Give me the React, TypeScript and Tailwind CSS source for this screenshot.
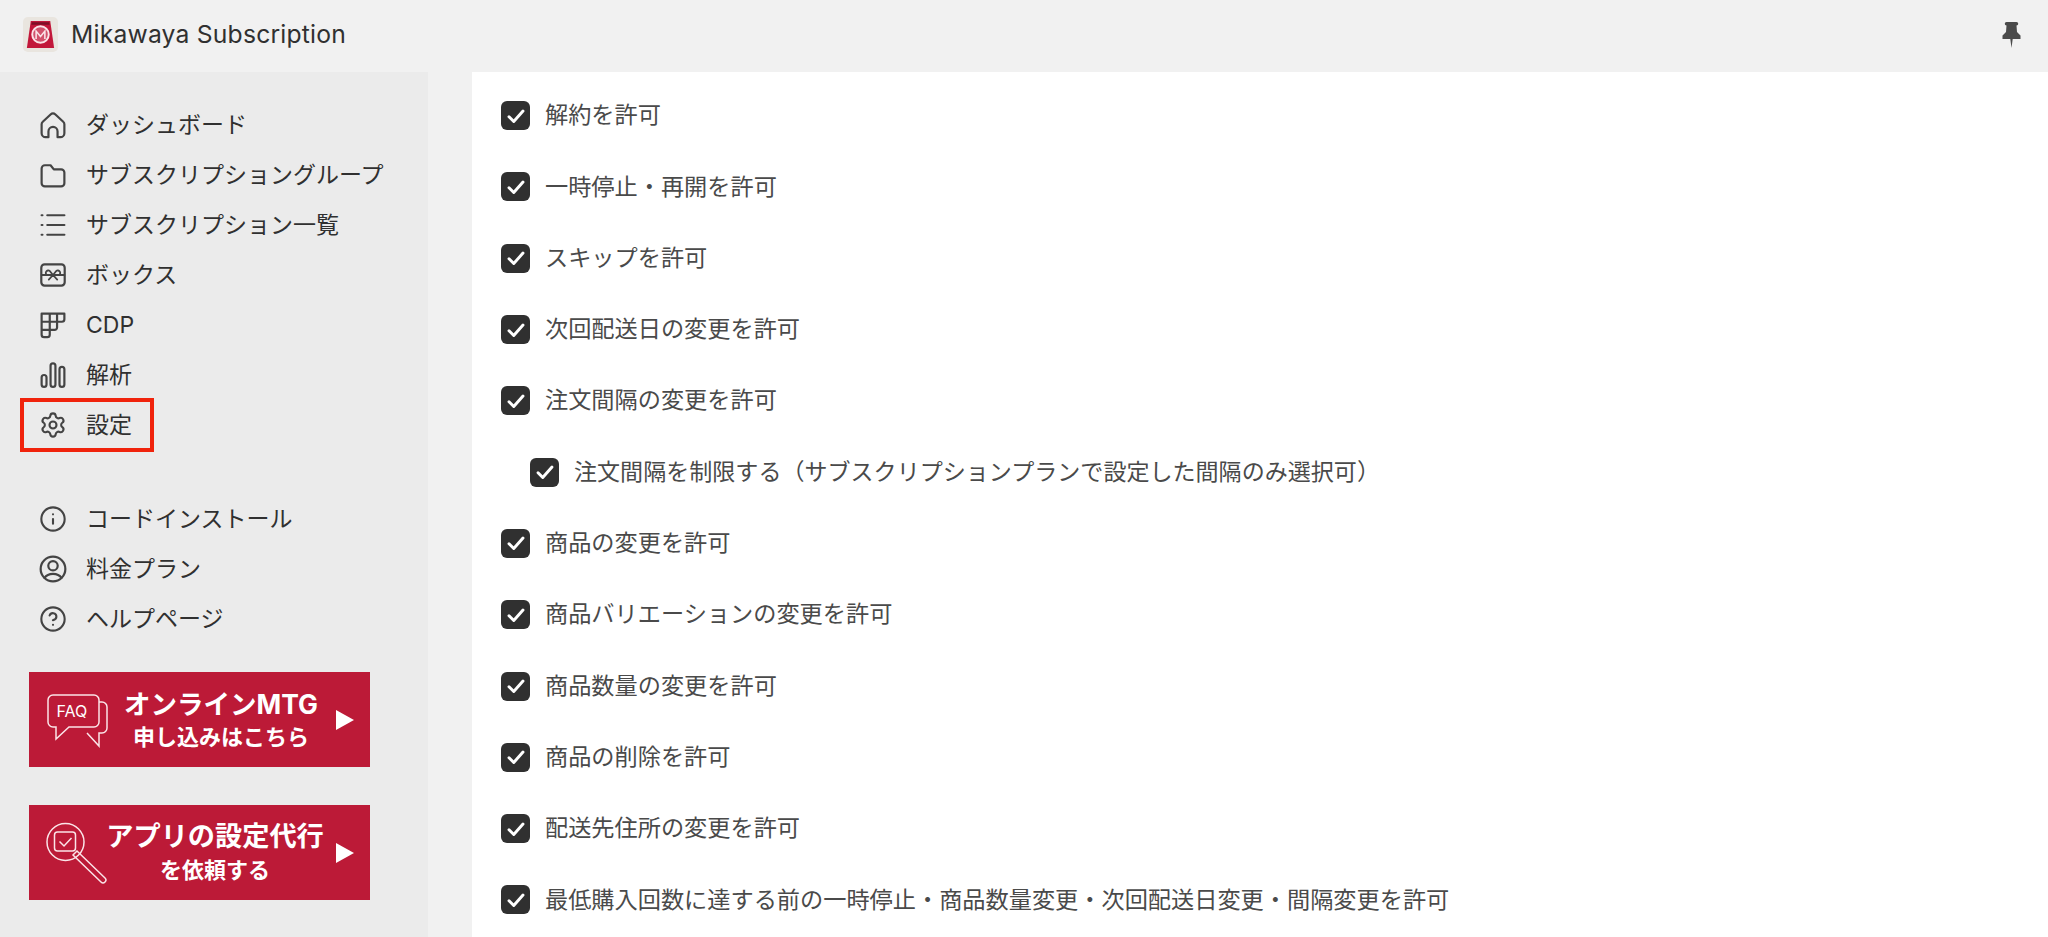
import React from "react";
import { CircleHelp, Info, Settings } from "lucide-react";

const FONT = "font-['Inter','Noto_Sans_CJK_JP',sans-serif]";

type IconProps = { children: React.ReactNode };

// cropped 20x20 outline icon shell, same weight as the lucide ones
const Outline = ({ children }: IconProps) => (
  <svg
    viewBox="2 2 16 16"
    className="h-[26px] w-[26px] shrink-0 overflow-visible text-[#444444]"
    fill="none"
    stroke="currentColor"
    strokeWidth="1.350"
    strokeLinecap="round"
    strokeLinejoin="round"
  >
    {children}
  </svg>
);

const HomeIcon = () => (
  <Outline>
    <path d="M3 9.500a2 2 0 0 1 .7-1.500l4.800-4.500a2.200 2.200 0 0 1 3 0L16.300 8a2 2 0 0 1 .7 1.500V15a2.500 2.500 0 0 1-2.500 2.500h-1.700V14a2.800 2.800 0 0 0-5.600 0v3.500H5.500A2.500 2.500 0 0 1 3 15Z" />
  </Outline>
);

const FolderIcon = () => (
  <Outline>
    <path d="M3 6a2 2 0 0 1 2-2h3.500l2 2.500H15a2 2 0 0 1 2 2V15a2 2 0 0 1-2 2H5a2 2 0 0 1-2-2Z" />
  </Outline>
);

const ListIcon = () => (
  <Outline>
    <path d="M6.500 4h10.500M6.500 10h10.500M6.500 16h10.500M3 4h.5M3 10h.5M3 16h.5" />
  </Outline>
);

const BoxIcon = () => (
  <Outline>
    <rect x="2.800" y="3.500" width="14.400" height="13" rx="2" />
    <path d="M10 10 8 7.500a1.500 1.500 0 1 0-1.800 2.500H10Zm0 0 2-2.500a1.500 1.500 0 1 1 1.800 2.500H10Zm0 0-2.600 2.800m2.600-2.800 2.600 2.800M3 10h2.500m9 0H17" strokeWidth="1.100" />
  </Outline>
);

const CdpIcon = () => (
  <Outline>
    <path d="M3 3h14v3.500a1.500 1.500 0 0 1-1.500 1.500H12.500v3.500A1.500 1.500 0 0 1 11 13H8v3a1.500 1.500 0 0 1-1.500 1.500h-2A1.500 1.500 0 0 1 3 16ZM3 8h9.500M3 13h5M8 3v10M12.500 3v5" />
  </Outline>
);

const ChartIcon = () => (
  <Outline>
    <rect x="3" y="10" width="3" height="7.300" rx="1.500" />
    <rect x="8.500" y="2.800" width="3" height="14.500" rx="1.500" />
    <rect x="14" y="5" width="3" height="12.300" rx="1.500" />
  </Outline>
);

const UserCircleIcon = () => (
  <Outline>
    <circle cx="10" cy="10" r="7.600" />
    <circle cx="10" cy="8" r="2.900" />
    <path d="M4.800 15.500c1-1.600 3-2.500 5.200-2.500s4.200.9 5.200 2.500" />
  </Outline>
);

const lucideClass = "mx-[-1px] h-[28px] w-[28px] shrink-0 text-[#444444]";

const navTop = [
  { label: "ダッシュボード", icon: <HomeIcon /> },
  { label: "サブスクリプショングループ", icon: <FolderIcon /> },
  { label: "サブスクリプション一覧", icon: <ListIcon /> },
  { label: "ボックス", icon: <BoxIcon /> },
  { label: "CDP", icon: <CdpIcon /> },
  { label: "解析", icon: <ChartIcon /> },
  {
    label: "設定",
    icon: <Settings className={lucideClass} strokeWidth={1.800} />,
    marked: true,
  },
];

const navBottom = [
  { label: "コードインストール", icon: <Info className={lucideClass} strokeWidth={1.800} /> },
  { label: "料金プラン", icon: <UserCircleIcon /> },
  { label: "ヘルプページ", icon: <CircleHelp className={lucideClass} strokeWidth={1.800} /> },
];

const options = [
  { label: "解約を許可" },
  { label: "一時停止・再開を許可" },
  { label: "スキップを許可" },
  { label: "次回配送日の変更を許可" },
  { label: "注文間隔の変更を許可" },
  { label: "注文間隔を制限する（サブスクリプションプランで設定した間隔のみ選択可）", nested: true },
  { label: "商品の変更を許可" },
  { label: "商品バリエーションの変更を許可" },
  { label: "商品数量の変更を許可" },
  { label: "商品の削除を許可" },
  { label: "配送先住所の変更を許可" },
  { label: "最低購入回数に達する前の一時停止・商品数量変更・次回配送日変更・間隔変更を許可" },
];

const NavItem = ({
  label,
  icon,
  marked,
}: {
  label: string;
  icon: React.ReactNode;
  marked?: boolean;
}) => (
  <div className="relative flex h-[50px] items-center gap-[20px] pl-[40px] text-[23px] text-[#303030]">
    {icon}
    <span className="whitespace-nowrap">{label}</span>
    {marked && (
      <div className="absolute left-[20px] top-[-2px] h-[54px] w-[134px] border-4 border-[#f0230c]" />
    )}
  </div>
);

const Checkbox = () => (
  <span className="flex h-[29px] w-[29px] shrink-0 items-center justify-center rounded-[6px] bg-[#303030]">
    <svg viewBox="0 0 20 20" className="h-[28px] w-[28px]" fill="none">
      <path
        d="M5 10.500l3.400 3.400L15 6.500"
        stroke="#fff"
        strokeWidth="2.100"
        strokeLinecap="round"
        strokeLinejoin="round"
      />
    </svg>
  </span>
);

const FaqGraphic = () => (
  <svg viewBox="0 0 62 54" className="mt-[3px] h-[54px] w-[62px] shrink-0" fill="none" stroke="#fbe4e8" strokeWidth="1.500">
    <path d="M6 1h41a5 5 0 0 1 5 5v22a5 5 0 0 1-5 5H22L9 45V33H6a5 5 0 0 1-5-5V6a5 5 0 0 1 5-5Z" />
    <path d="M52 8h3a5 5 0 0 1 5 5v21a5 5 0 0 1-5 5h-3v13L40 39" />
    <text x="9.500" y="23" fill="#fff" stroke="none" fontSize="16" fontWeight="400" fontFamily="Inter">
      FAQ
    </text>
  </svg>
);

const SearchGraphic = () => (
  <svg viewBox="0 0 62 62" className="h-[62px] w-[62px] shrink-0" fill="none" stroke="#fbe4e8" strokeWidth="1.500">
    <circle cx="19.500" cy="20" r="18.500" />
    <rect x="8.500" y="10" width="21" height="19" rx="3" />
    <path d="m13.500 19.500 4.500 4.500 7.500-8" />
    <path d="M27 33l4-4 28 27a2.800 2.800 0 0 1-4 4Z" />
  </svg>
);

const Banner = ({
  graphic,
  title,
  sub,
  textClass,
  titleClass,
  pad,
}: {
  graphic: React.ReactNode;
  title: string;
  sub: string;
  textClass: string;
  titleClass: string;
  pad: string;
}) => (
  <div className={`flex h-[95px] w-[341px] items-center bg-[#bc1a37] pr-[16px] text-white ${pad}`}>
    {graphic}
    <div className={`flex flex-col items-center ${textClass}`}>
      <span className={`whitespace-nowrap font-bold leading-[36px] ${titleClass}`}>{title}</span>
      <span className="whitespace-nowrap text-[22px] font-semibold leading-[31px]">{sub}</span>
    </div>
    <svg viewBox="0 0 18 20" className="ml-auto h-[20px] w-[18px]">
      <path d="M0 0 18 10 0 20Z" fill="#fff" />
    </svg>
  </div>
);

export default function App() {
  return (
    <div className={`flex h-[937px] w-[2048px] flex-col overflow-hidden bg-[#f1f1f1] ${FONT}`}>
      {/* Top bar */}
      <header className="flex h-[72px] shrink-0 items-center pb-[3px] pl-[23px] pr-[27px]">
        <svg viewBox="0 0 36 36" className="mr-[13px] h-[35px] w-[35px] shrink-0">
          <rect width="36" height="36" rx="5" fill="#e9e5df" />
          <path d="M8 4h20l4 28H4Z" fill="#c2173a" />
          <path d="M9 5.500h18l.5 2.500h-19Z" fill="#7c0f26" />
          <circle cx="18" cy="18" r="8.500" fill="#d2526c" stroke="#fbe4e8" strokeWidth="2" />
          <path d="M13.500 22.500v-8L18 20l4.500-5.500v8" fill="none" stroke="#fbe4e8" strokeWidth="1.600" />
        </svg>
        <span className="text-[24.700px] tracking-[0.2px] text-[#303030]">Mikawaya Subscription</span>
        <svg viewBox="0 0 18 26" className="ml-auto h-[26px] w-[19px] text-[#4a4a4a]">
          <path
            d="M4 0h10a1.500 1.500 0 0 1 0 3.500l.5 6.500L18 13.500V17H10.200L9 26l-1.200-9H0v-3.500L3.500 10 4 3.500A1.500 1.500 0 0 1 4 0Z"
            fill="currentColor"
          />
        </svg>
      </header>

      <div className="flex min-h-0 flex-1">
        {/* Sidebar */}
        <aside className="flex w-[428px] shrink-0 flex-col bg-[#ebebeb] pt-[28px]">
          {navTop.map((item) => (
            <NavItem key={item.label} {...item} />
          ))}
          <div className="h-[44px]" />
          {navBottom.map((item) => (
            <NavItem key={item.label} {...item} />
          ))}
          <div className="mt-[28px] flex flex-col gap-[38px] pl-[29px]">
            <Banner
              graphic={<FaqGraphic />}
              title="オンラインMTG"
              sub="申し込みはこちら"
              textClass="w-[224px]"
              titleClass="text-[26.500px]"
              pad="pl-[18px]"
            />
            <Banner
              graphic={<SearchGraphic />}
              title="アプリの設定代行"
              sub="を依頼する"
              textClass="w-[214px]"
              titleClass="text-[27.200px]"
              pad="pl-[17px]"
            />
          </div>
        </aside>

        {/* Settings list */}
        <main className="ml-[44px] flex-1 bg-white pt-[8px]">
          {options.map((opt) => (
            <label
              key={opt.label}
              className={`flex h-[71.300px] items-center gap-[15px] text-[#4a4a4a] ${
                opt.nested ? "pl-[58px] text-[23.050px]" : "pl-[29px] text-[23.200px]"
              }`}
            >
              <Checkbox />
              <span className="whitespace-nowrap">{opt.label}</span>
            </label>
          ))}
        </main>
      </div>
    </div>
  );
}
